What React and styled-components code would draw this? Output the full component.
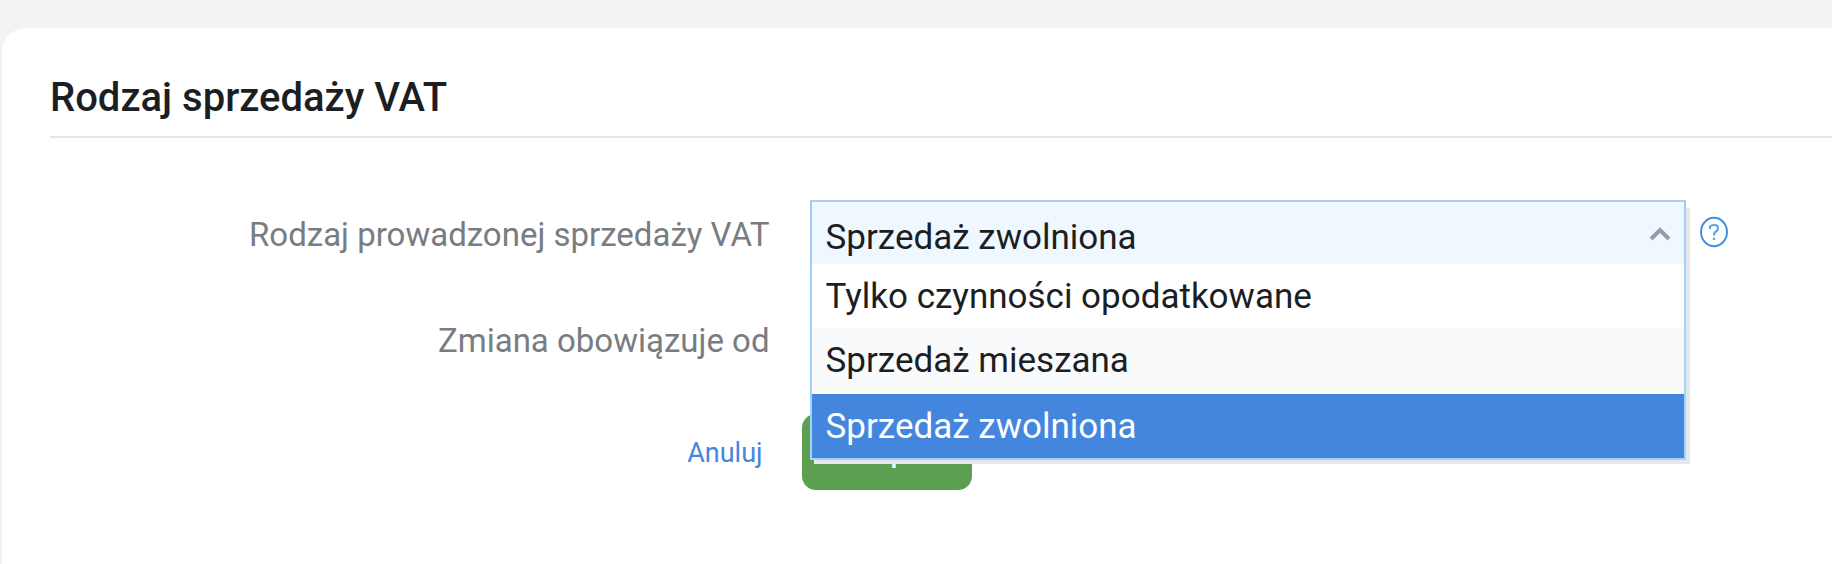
import React, { useState, } from "react";
import styled, { ThemeProvider, createGlobalStyle, css, } from "styled-components";

// ------------------------------

const theme = {
	background: "#f2f3f5",
	blue: "#4486de",
	border: "#9fd4fa",
	borderDark: "#b4cde2",
	borderMid: "#a9cdec",
	gray: "#797c81",
	green: "#5c9f51",
	line: "#e5e5e5",
	shadow: "#e6e8ee",
	text: "#1b1e23",
};

const GlobalStyle = createGlobalStyle`
	* {
		box-sizing: border-box;
	}

	body {
		background-color: ${ theme.background };
		color: ${ theme.text };
		font-family: Roboto, "Liberation Sans", sans-serif;
		margin: 0;
	}
`;

// ------------------------------

const Page = styled.main`
	display: flex;
	flex-direction: column;
	min-height: 100vh;
	padding: 28px 0 0 2px;
`;

const Card = styled.form`
	background-color: white;
	border-radius: 24px 0 0 0;
	flex: 1;
	padding: 42px 0 0 48px;
`;

const Title = styled.h1`
	border-bottom: 2px solid ${ props => props.theme.line };
	font-size: 40px;
	font-weight: 500;
	line-height: 56px;
	margin: 0;
	padding-bottom: 10px;
`;

const Row = styled.div`
	align-items: center;
	column-gap: 40px;
	display: grid;
	grid-template-columns: 43% 1fr;
	margin-top: ${ props => props.$gap };
	min-height: 64px;
	padding: 0 104px 0 0;
`;

const Label = styled.label`
	color: ${ props => props.theme.gray };
	font-size: 33px;
	line-height: 40px;
	padding: 6px 2px 0 0;
	text-align: right;
`;

const Field = styled.div`
	align-items: center;
	display: flex;
	gap: 14px;
	margin-left: -2px;
`;

const DropDown = styled.div`
	border: 2px solid ${ props => props.theme.borderMid };
	border-bottom: 0;
	border-top-color: ${ props => props.theme.borderDark };
	box-shadow: 4px 8px 0 ${ props => props.theme.shadow };
	flex: 1;
	height: 64px;
	position: relative;
`;

const optionStyling = css`
	border: 0;
	color: ${ props => props.theme.text };
	display: block;
	font-family: inherit;
	font-size: 35px;
	line-height: 40px;
	padding: 13px 14px 11px;
	text-align: left;
	width: 100%;
`;

const Select = styled.select`
	${ optionStyling }
	appearance: none;
	background-color: #eff7ff;
	height: 62px;
	outline: 0;
	padding: 16px 14px 8px;
`;

const Chevron = styled.svg`
	pointer-events: none;
	position: absolute;
	right: 12px;
	top: 24px;
`;

const Menu = styled.div`
	border: 2px solid ${ props => props.theme.border };
	border-top: 0;
	box-shadow: 4px 4px 0 ${ props => props.theme.shadow };
	left: -2px;
	position: absolute;
	right: -2px;
	top: 62px;
	z-index: 1;
`;

const Option = styled.button`
	${ optionStyling }
	background-color: white;

	&:nth-child(even) {
		background-color: #f9fafc;
		padding-bottom: 13px;
	}

	&[aria-selected="true"] {
		background-color: ${ props => props.theme.blue };
		color: white;
	}
`;

const Help = styled.button`
	background: none;
	border: 0;
	color: #4292df;
	display: flex;
	padding: 0;
`;

const Cancel = styled.a`
	color: ${ props => props.theme.blue };
	font-size: 27px;
	justify-self: end;
	line-height: 32px;
	padding: 2px 9px 0 0;
	text-decoration: none;
`;

const Submit = styled.button`
	background-color: ${ props => props.theme.green };
	border: 0;
	border-radius: 14px;
	color: white;
	font-family: inherit;
	font-size: 28px;
	font-weight: 500;
	height: 76px;
	justify-self: start;
	margin-left: -10px;
	padding: 0 30px 0 57px;
`;

// ------------------------------

const options = [
	"Tylko czynności opodatkowane",
	"Sprzedaż mieszana",
	"Sprzedaż zwolniona",
];

export default () => {
	const [ selected, setSelected, ] = useState("Sprzedaż zwolniona");

	return (
		<ThemeProvider theme = { theme }>
			<GlobalStyle />

			<Page>
				<Card>
					<Title>Rodzaj sprzedaży VAT</Title>

					<Row $gap = "62px">
						<Label htmlFor = "vat-type">Rodzaj prowadzonej sprzedaży VAT</Label>

						<Field>
							<DropDown>
								<Select
									id = "vat-type"
									value = { selected }
									onChange = { e => setSelected(e.target.value) }
								>
									{
										options.map(option => (
											<option key = { option }>{option}</option>
										))
									}
								</Select>

								<Chevron width = "24" height = "16" viewBox = "0 0 24 16" fill = "none">
									<path d = "M3 13L12 4L21 13" stroke = "#929daa" strokeWidth = "4" />
								</Chevron>

								<Menu role = "listbox" aria-label = "Rodzaj prowadzonej sprzedaży VAT">
									{
										options.map(option => (
											<Option
												key = { option }
												type = "button"
												role = "option"
												aria-selected = { option === selected }
												onClick = { () => setSelected(option) }
											>
												{option}
											</Option>
										))
									}
								</Menu>
							</DropDown>

							<Help type = "button" aria-label = "Pomoc">
								<svg width = "28" height = "32" viewBox = "0 0 28 32" fill = "none" stroke = "currentColor">
									<ellipse cx = "14" cy = "16" rx = "13" ry = "14.2" strokeWidth = "2" />
									<path d = "M10 13V10.5Q11.5 9 14 9Q18 9 18 12Q18 14.5 16 15.5Q14 16.5 14 19.5M14 21.5V24" strokeWidth = "2.2" strokeOpacity = "0.85" />
								</svg>
							</Help>
						</Field>
					</Row>

					<Row $gap = "42px">
						<Label as = "span">Zmiana obowiązuje od</Label>
					</Row>

					<Row $gap = "44px">
						<Cancel href = "#anuluj">Anuluj</Cancel>
						<Submit type = "submit">Zapisz</Submit>
					</Row>
				</Card>
			</Page>
		</ThemeProvider>
	);
};
